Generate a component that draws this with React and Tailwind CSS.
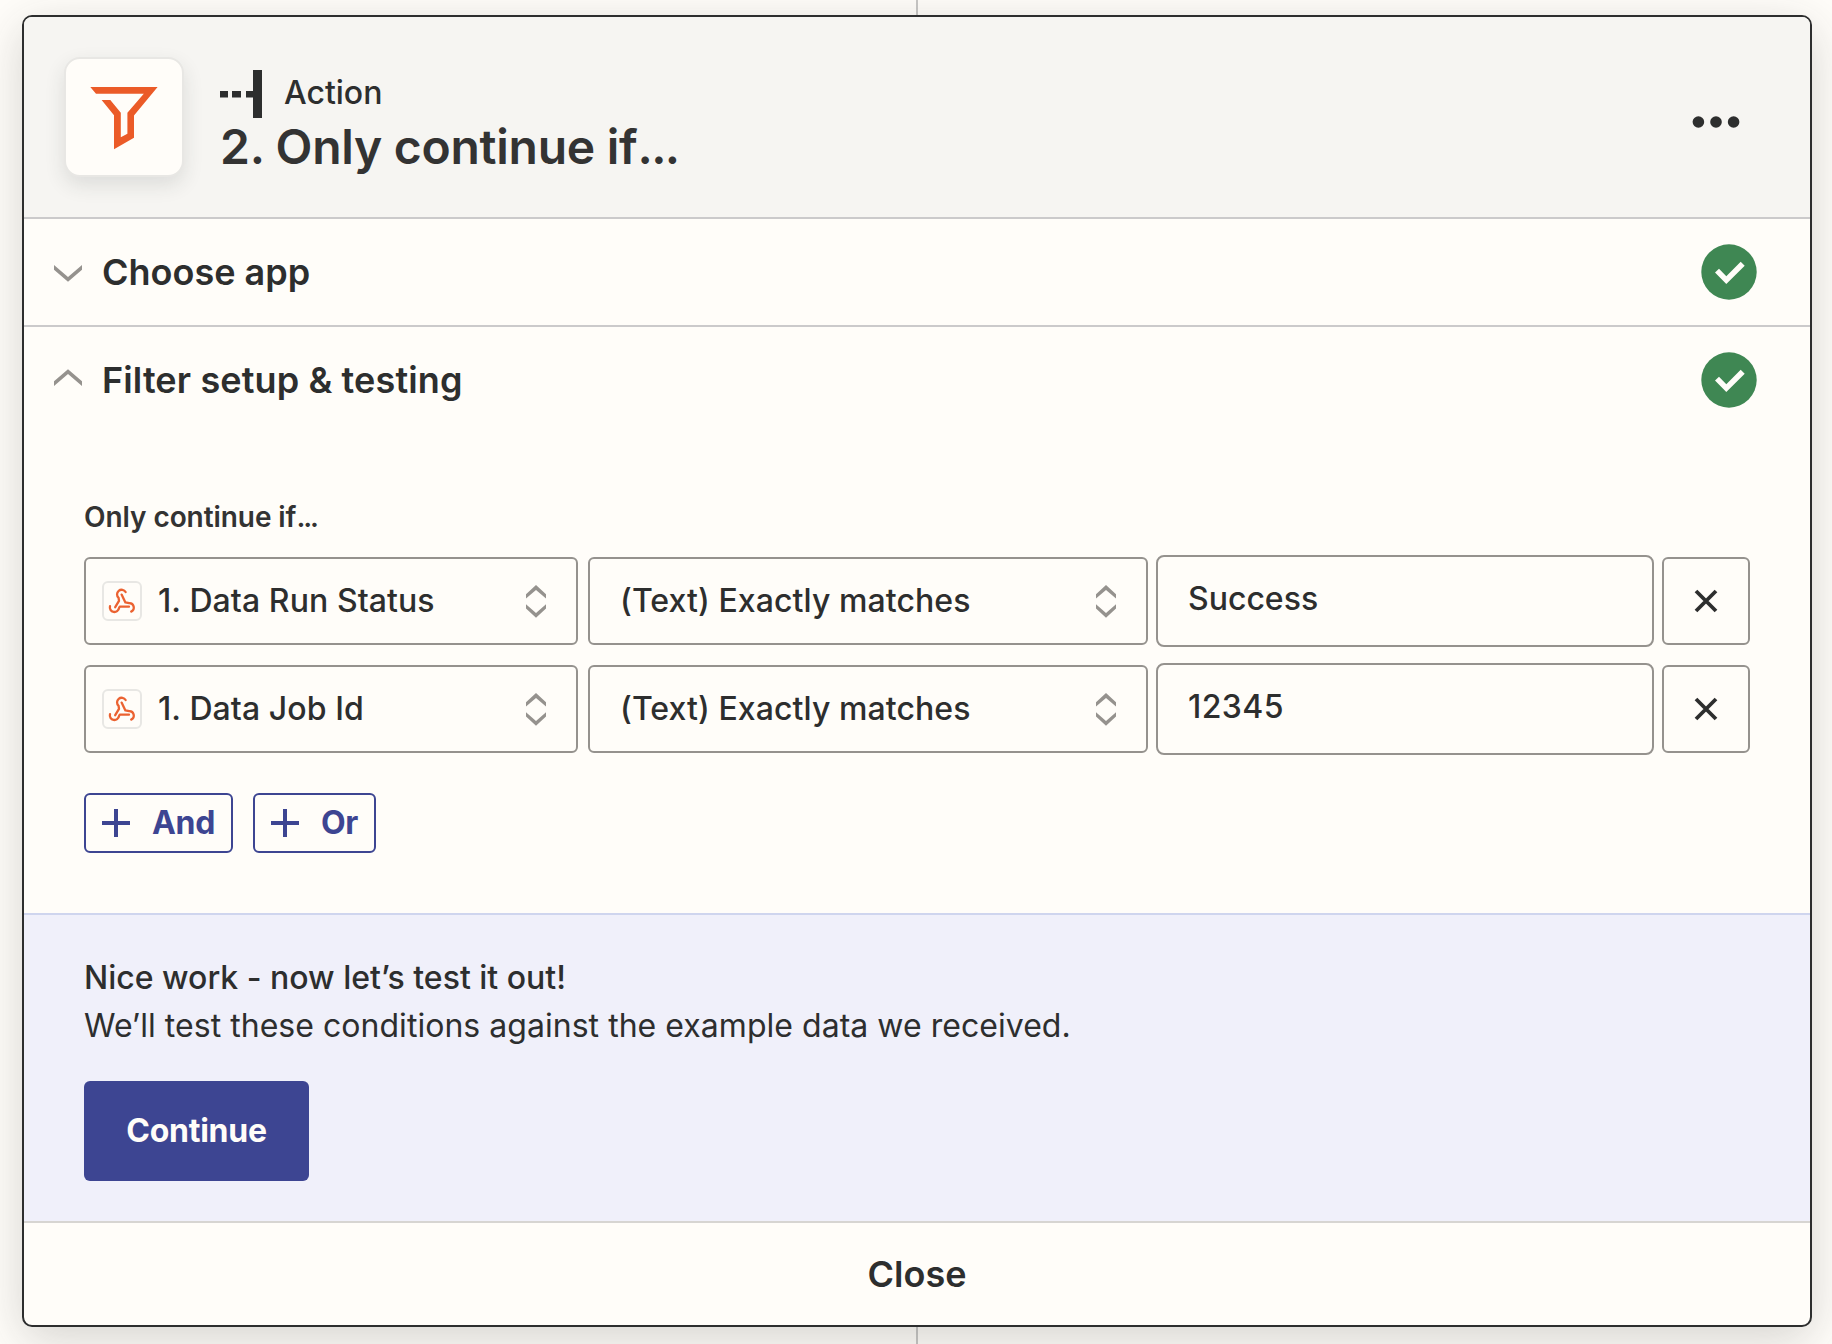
const Chevron = ({ up = false }) => (
  <svg viewBox="0 0 28 17" className={up ? "mb-[5px] h-[17px] w-7 rotate-180" : "mt-[3px] h-[17px] w-7"} fill="#95928E">
    <path d="M0 0 14 12 28 0V4.7L14 16.7 0 4.7Z" />
  </svg>
);

const CheckBadge = () => (
  <svg viewBox="0 0 56 56" className="h-14 w-14">
    <circle cx="28" cy="28" r="27.7" fill="#3F8753" />
    <path d="M14 28.5 18 24.7 25.3 32.2 39.7 17.7 43.7 21.7 25.3 40Z" fill="#FFFDF9" />
  </svg>
);

const Sorter = () => (
  <svg viewBox="0 0 20 33" className="h-[33px] w-5 shrink-0" fill="#95928E">
    <path d="M0 9.2 10 0 20 9.2V13.6L10 4.9 0 13.6Z" />
    <path d="M0 19.2 10 27.9 20 19.2V23.6L10 32.8 0 23.6Z" />
  </svg>
);

const WebhookIcon = () => (
  <svg viewBox="2 2 36 36" className="h-9 w-9" fill="none" stroke="#EB6231" strokeWidth="2.3" strokeLinecap="round" strokeLinejoin="round">
    <path d="M23.6 11A4.6 4.6 0 1 0 16.6 16.8L17 19.8 13.2 26.2" />
    <path d="M19.6 13.6 23.4 21.4 27.2 22.2A4.4 4.4 0 0 1 29.2 30.6" />
    <path d="M8 25.2A4.6 4.6 0 1 0 17 27L17.8 25.7H27" />
  </svg>
);

const SectionHeader = ({ title, up, className }) => (
  <div className={"flex items-center pl-[30px] pr-[53px] " + className}>
    <Chevron up={up} />
    <h2 className="ml-5 text-[36px] font-semibold leading-[44px]">{title}</h2>
    <div className="ml-auto"><CheckBadge /></div>
  </div>
);

const Rule = ({ field, value, valueClass }) => (
  <div className="flex h-[92px] items-center text-[32px] font-medium leading-10">
    <div className="flex h-[88px] w-[494px] items-center rounded-[6px] border-2 border-[#95928E] pl-4 pr-[30px]">
      <span className="h-10 w-10 shrink-0 rounded-[6px] border-2 border-[#E8E7E4]">
        <WebhookIcon />
      </span>
      <span className="ml-4 flex-1 whitespace-nowrap tracking-[0.08px]">{field}</span>
      <Sorter />
    </div>
    <div className="ml-[10px] flex h-[88px] w-[560px] items-center rounded-[6px] border-2 border-[#95928E] pl-[30px] pr-[30px]">
      <span className="flex-1 whitespace-nowrap tracking-[0.08px]">(Text) Exactly matches</span>
      <Sorter />
    </div>
    <div className={"ml-2 flex h-[92px] w-[498px] items-center rounded-[8px] border-2 border-[#95928E] pb-1 pl-[30px] " + valueClass}>
      {value}
    </div>
    <button className="ml-2 flex h-[88px] w-[88px] items-center justify-center rounded-[6px] border-2 border-[#95928E]">
      <svg viewBox="0 0 24 24" className="h-6 w-6" stroke="#2D2E2E" strokeWidth="3.8">
        <path d="M2 2 22 22M22 2 2 22" />
      </svg>
    </button>
  </div>
);

const AddButton = ({ label, className }) => (
  <button className={"flex h-[60px] items-center rounded-[6px] border-2 border-[#3D4592] pl-4 text-[32px] font-bold leading-10 tracking-[-0.3px] text-[#3D4592] " + className}>
    <svg viewBox="0 0 28 28" className="h-7 w-7" stroke="#3D4592" strokeWidth="4">
      <path d="M14 0V28M0 14H28" />
    </svg>
    <span className="ml-[22px]">{label}</span>
  </button>
);

export default function App() {
  return (
    <div className="relative h-[1344px] w-[1832px] overflow-hidden bg-[#FFFDF9] pl-[22px] pt-[15px] font-['Inter',sans-serif] text-[#2D2E2E]">
      <div className="absolute left-[916px] top-0 h-full w-0.5 bg-[#C8C7C5]" />
      <main className="relative flex h-[1312px] w-[1790px] flex-col overflow-hidden rounded-[10px] border-2 border-[#2D2E2E] bg-[#FFFDF9] shadow-[0_12px_48px_rgba(45,46,46,0.2)]">
        <header className="flex h-[202px] shrink-0 items-start border-b-2 border-[#CBCACB] bg-[#F6F5F2] pl-10 pr-[70px] pt-10">
          <div className="h-[120px] w-[120px] rounded-[16px] border-2 border-[#E8E7E4] bg-[#FFFDF9] shadow-[0_8px_20px_rgba(45,46,46,0.12)]">
            <svg viewBox="66 59 116 116" className="h-[116px] w-[116px]">
              <path fillRule="evenodd" fill="#EB5B28" d="M90.3 87H157.6L134 115.6V137.7L114 149.2V115.3L101.6 100H110.3L120.8 112.8V137.3L127.4 133.7V112.8L143.8 93.7H96Z" />
            </svg>
          </div>
          <div className="ml-9 mt-[13px]">
            <div className="flex items-center">
              <svg viewBox="0 0 42 48" className="h-12 w-[42px]" fill="#2D2E2E">
                <path d="M0 21H8V27.5H0ZM12 21H21V27.5H12ZM26 21H34V27.5H26ZM33 0H42V48H33Z" />
              </svg>
              <span className="-mt-0.5 ml-[22px] text-[32px] font-medium leading-10">Action</span>
            </div>
            <h1 className="text-[48px] font-semibold leading-[58px] tracking-[-0.26px] text-[#333333]">
              2. Only continue if<span className="tracking-[-1.6px]">...</span>
            </h1>
          </div>
          <svg viewBox="0 0 48 12" className="ml-auto mt-[59px] h-3 w-12" fill="#2D2E2E">
            <circle cx="6.4" cy="6" r="5.8" />
            <circle cx="24" cy="6" r="5.8" />
            <circle cx="41.6" cy="6" r="5.8" />
          </svg>
        </header>

        <SectionHeader title="Choose app" className="h-[108px] shrink-0 border-b-2 border-[#CBCACB]" />

        <section className="h-[586px] shrink-0">
          <SectionHeader title="Filter setup & testing" up className="h-[106px] tracking-[0.12px]" />
          <div className="pl-[60px] pt-[66px]">
            <p className="text-[28px] font-semibold leading-9 tracking-[-0.07px] text-[#333333]">
              Only continue if<span className="tracking-[-2.1px]">...</span>
            </p>
            <div className="mt-5 flex flex-col gap-4">
              <Rule field="1. Data Run Status" value="Success" valueClass="tracking-normal" />
              <Rule field="1. Data Job Id" value="12345" valueClass="tracking-[0.4px]" />
            </div>
            <div className="mt-[38px] flex gap-5">
              <AddButton label="And" className="w-[149px]" />
              <AddButton label="Or" className="w-[123px]" />
            </div>
          </div>
        </section>

        <section className="h-[308px] shrink-0 border-t-2 border-[#CFD5EE] bg-[#F0F0FA] pl-[60px] pt-[39px] text-[32px] leading-[48px]">
          <p className="font-medium">Nice work - now let’s test it out!</p>
          <p className="tracking-[0.035px]">We’ll test these conditions against the example data we received.</p>
          <button className="mt-[31px] flex h-[100px] w-[225px] items-center justify-center rounded-[6px] bg-[#3D4592] font-bold tracking-[-0.25px] text-[#FFFDF9]">
            Continue
          </button>
        </section>

        <button className="flex-1 border-t-2 border-[#D7D5D2] text-[36px] font-semibold leading-[44px]">Close</button>
      </main>
    </div>
  );
}
